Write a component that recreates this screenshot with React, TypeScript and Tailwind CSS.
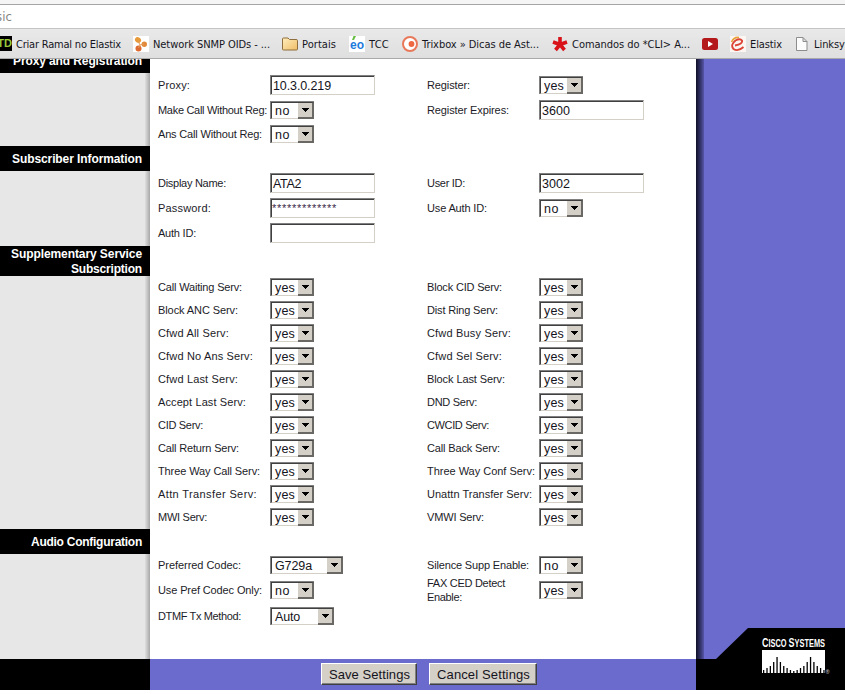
import { useLayoutEffect, useRef } from "react";
import type { ReactNode } from "react";

/** Single line of text whose tracking is tuned so that it spans `w` pixels. */
function Fit({ w, children, className = "" }: { w: number; children: string; className?: string }) {
  const ref = useRef<HTMLSpanElement>(null);
  useLayoutEffect(() => {
    const el = ref.current;
    if (!el) return;
    el.style.letterSpacing = "0px";
    const natural = el.getBoundingClientRect().width;
    el.style.letterSpacing = `${(w - natural) / children.length}px`;
  }, [w, children]);
  return (
    <span ref={ref} className={`inline-block whitespace-pre ${className}`}>
      {children}
    </span>
  );
}

type Line = [string, number];
type Control = { kind: "select" | "input"; value: string; textW: number; wide?: "codec" | "dtmf" };
type Field = { label: Line[]; control: Control };

const yes: Control = { kind: "select", value: "yes", textW: 20 };
const no: Control = { kind: "select", value: "no", textW: 15 };
const input = (value: string, textW: number): Control => ({ kind: "input", value, textW });
const f = (text: string, w: number, control: Control = yes): Field => ({ label: [[text, w]], control });

const registration: [Field, Field | null][] = [
  [f("Proxy:", 32, input("10.3.0.219", 58)), f("Register:", 43)],
  [f("Make Call Without Reg:", 109, no), f("Register Expires:", 82, input("3600", 28))],
  [f("Ans Call Without Reg:", 104, no), null],
];
const subscriber: [Field, Field | null][] = [
  [f("Display Name:", 68, input("ATA2", 28)), f("User ID:", 38, input("3002", 28))],
  [f("Password:", 53, input("*************", 65)), f("Use Auth ID:", 60, no)],
  [f("Auth ID:", 38, input("", 0)), null],
];
const services: [Field, Field][] = [
  [f("Call Waiting Serv:", 84), f("Block CID Serv:", 75)],
  [f("Block ANC Serv:", 80), f("Dist Ring Serv:", 71)],
  [f("Cfwd All Serv:", 71), f("Cfwd Busy Serv:", 84)],
  [f("Cfwd No Ans Serv:", 95), f("Cfwd Sel Serv:", 75)],
  [f("Cfwd Last Serv:", 80), f("Block Last Serv:", 78)],
  [f("Accept Last Serv:", 88), f("DND Serv:", 50)],
  [f("CID Serv:", 45), f("CWCID Serv:", 62)],
  [f("Call Return Serv:", 81), f("Call Back Serv:", 73)],
  [f("Three Way Call Serv:", 102), f("Three Way Conf Serv:", 108)],
  [f("Attn Transfer Serv:", 99), f("Unattn Transfer Serv:", 105)],
  [f("MWI Serv:", 49), f("VMWI Serv:", 57)],
];

function Select({ c }: { c: Control }) {
  const width = c.wide === "codec" ? "w-[73px]" : c.wide === "dtmf" ? "w-16" : "w-11";
  return (
    <div className={`flex h-[18px] ${width} border-l border-t border-[#808080] bg-white`}>
      <div className="flex min-w-0 flex-1 items-center border-b border-l border-t border-b-[#d4d0c8] border-l-[#404040] border-t-[#404040] pl-[3px] pt-px text-[12.5px] leading-[15px]">
        <Fit w={c.textW}>{c.value}</Fit>
      </div>
      <div className="flex h-[17px] w-4 shrink-0 items-center justify-center border-b-2 border-r-2 border-t border-b-[#6a6864] border-r-[#6a6864] border-t-[#404040] bg-[#d4d0c8]">
        <svg width="7" height="4" viewBox="0 0 7 4" shapeRendering="crispEdges">
          <path d="M0 0h7v1H0zM1 1h5v1H1zM2 2h3v1H2zM3 3h1v1H3z" fill="#000" />
        </svg>
      </div>
    </div>
  );
}

function Input({ c }: { c: Control }) {
  const stars = c.value.startsWith("*");
  return (
    <div className="h-5 w-[105px] border border-b-[#d4d0c8] border-l-[#808080] border-r-[#d4d0c8] border-t-[#808080] bg-white">
      <div
        className={`h-full border-l border-t border-[#404040] ${
          stars ? "text-[11px] leading-[16px] text-[#3a2848]" : "pl-px text-[12.5px] leading-[18px]"
        }`}
      >
        {c.value && <Fit w={c.textW}>{c.value}</Fit>}
      </div>
    </div>
  );
}

function Cell({ field }: { field: Field | null }) {
  if (!field) return <div className="w-[269px]" />;
  const { label, control } = field;
  return (
    <div className="flex h-full w-[269px] items-center">
      <div className="flex w-28 shrink-0 flex-col text-[11px] leading-[14px] text-[#1c1c28]">
        {label.map(([text, w]) => (
          <div key={text}>
            <Fit w={w}>{text}</Fit>
          </div>
        ))}
      </div>
      {control.kind === "select" ? <Select c={control} /> : <Input c={control} />}
    </div>
  );
}

function Row({ pair, height }: { pair: [Field | null, Field | null]; height: string }) {
  return (
    <div className={`mb-px flex items-center pl-2 ${height}`}>
      <Cell field={pair[0]} />
      <Cell field={pair[1]} />
    </div>
  );
}

function Heading({ children, className }: { children: ReactNode; className: string }) {
  return (
    <div className={`flex flex-col items-end justify-center bg-black pr-2 pt-px text-[12px] font-bold leading-[15px] text-white ${className}`}>
      {children}
    </div>
  );
}

function Panel({ className }: { className: string }) {
  return (
    <div className={`flex justify-end bg-[#e7e7e7] ${className}`}>
      <div className="w-[5px] bg-linear-to-r from-[#e0e0e0] to-[#a8a8a8]" />
    </div>
  );
}

function Bookmark({ icon, text, w, className }: { icon: ReactNode; text?: string; w?: number; className: string }) {
  return (
    <div className={`flex shrink-0 items-center ${className}`}>
      <div className="flex w-4 shrink-0 justify-center">{icon}</div>
      {text && w && (
        <div className="pl-1 pt-[3px]">
          <Fit w={w}>{text}</Fit>
        </div>
      )}
    </div>
  );
}

function Bookmarks() {
  return (
    <div className="flex h-[31px] items-center overflow-hidden border-b border-t border-b-[#a9a9a9] border-t-[#c4c4c4] bg-linear-to-b from-[#e9e9e9] to-[#dfdfdf] font-['DejaVu_Sans_Condensed','DejaVu_Sans',sans-serif] text-[11px] text-[#15151d]">
      <Bookmark
        className="-ml-1 w-[137px]"
        text="Criar Ramal no Elastix"
        w={105}
        icon={
          <div className="flex h-[15px] w-4 items-center justify-end overflow-hidden bg-black font-['Liberation_Sans',sans-serif] text-[11px] font-bold text-[#9acb3c]">
            TD
          </div>
        }
      />
      <Bookmark
        className="w-[149px]"
        text="Network SNMP OIDs - ..."
        w={117}
        icon={
          <svg width="16" height="16" viewBox="0 0 16 16">
            <path d="M0 0h16v16H0z" fill="#fff" />
            <ellipse cx="5" cy="4" rx="3.200" ry="2.700" transform="rotate(35 5 4)" fill="#e79a3a" />
            <circle cx="11.3" cy="8.2" r="2.700" fill="#e28a3a" />
            <circle cx="5.500" cy="12.500" r="3" fill="#dd6a30" />
            <path d="M5 5l2 4-1.500 3M7 9l4-1" stroke="#e39a58" fill="none" />
          </svg>
        }
      />
      <Bookmark
        className="w-[67px]"
        text="Portais"
        w={34}
        icon={
          <svg width="16" height="14" viewBox="0 0 16 14">
            <defs>
              <linearGradient id="folder" x1="0" y1="0" x2="1" y2="1">
                <stop offset="0" stopColor="#ffedbc" />
                <stop offset="1" stopColor="#efbd67" />
              </linearGradient>
            </defs>
            <path d="M.5 12V2Q.5 1 1.500 1h4.500l1.500 1.500h6.500q1.500 0 1.500 1V12q0 1-1 1H1.500q-1 0-1-1z" fill="url(#folder)" stroke="#8e6e3e" />
          </svg>
        }
      />
      <Bookmark
        className="w-[53px]"
        text="TCC"
        w={20}
        icon={
          <div className="relative flex h-4 w-4 items-end justify-center bg-white pb-px font-['Liberation_Sans_Narrow','Liberation_Sans',sans-serif] text-[12px] font-bold leading-[11px] text-[#1d7bdc]">
            eo
            <svg className="absolute left-0.5 top-0" width="5" height="4" viewBox="0 0 5 4">
              <path d="M1 4 2.500 0H5L3 4z" fill="#68bd45" />
            </svg>
          </div>
        }
      />
      <Bookmark
        className="w-[150px]"
        text="Trixbox » Dicas de Ast..."
        w={117}
        icon={
          <svg width="16" height="16" viewBox="0 0 16 16">
            <circle cx="8" cy="8" r="7" fill="#fff" stroke="#e9785a" strokeWidth="2" />
            <circle cx="9.500" cy="8" r="2.900" fill="#ef6740" />
          </svg>
        }
      />
      <Bookmark
        className="w-[150px]"
        text="Comandos do *CLI> A..."
        w={118}
        icon={
          <svg width="16" height="16" viewBox="0 0 16 16">
            <path d="M8 8.500V1M8 8.500L1 6M8 8.500L15 6M8 8.500L3.500 14M8 8.500L12.500 14" stroke="#d91118" strokeWidth="3.600" fill="none" />
          </svg>
        }
      />
      <Bookmark
        className="w-7"
        icon={
          <svg width="16" height="12" viewBox="0 0 16 12">
            <rect width="16" height="12" rx="2.500" fill="#b3191b" />
            <path d="M6 3v6l5-3z" fill="#fff" />
          </svg>
        }
      />
      <Bookmark
        className="w-[64px]"
        text="Elastix"
        w={32}
        icon={
          <svg width="16" height="16" viewBox="0 0 16 16">
            <path d="M0 0h16v16H0z" fill="#fbf6f2" />
            <path d="M1.500 6Q4 .8 9 1.500" stroke="#e8a43a" strokeWidth="1.600" fill="none" />
            <path d="M5 9.500Q13 8 12 4.500Q10 2 5.500 4.500Q0 9 3.500 13Q8 16 13.500 11" stroke="#dc4436" strokeWidth="1.900" fill="none" />
          </svg>
        }
      />
      <Bookmark
        className="w-14"
        text="Linksys"
        w={36}
        icon={
          <svg width="12" height="14" viewBox="0 0 12 14">
            <path d="M.5.5h6.500l4 4v9H.5zM7 .5v4h4" fill="#fcfcfc" stroke="#8d8d8d" />
          </svg>
        }
      />
    </div>
  );
}

function SettingsButton({ text, w, className }: { text: string; w: number; className: string }) {
  return (
    <div
      className={`flex h-[22px] items-center border border-b-[#404040] border-l-white border-r-[#404040] border-t-white bg-[#d4d0c8] pl-[7px] pt-px text-[13px] shadow-[inset_-1px_-1px_0_#808080] ${className}`}
    >
      <Fit w={w}>{text}</Fit>
    </div>
  );
}

const bridge = [3, 5, 7, 11, 16, 11, 7, 5, 3, 2, 3, 5, 7, 11, 16, 11, 7, 5, 3];

function CiscoCorner() {
  return (
    <svg className="absolute bottom-0 right-0" width="149" height="62" viewBox="0 0 149 62">
      <path d="M0 31H20L52 0H149V62H0z" fill="#000" />
      <text
        x="66"
        y="19"
        textLength="63"
        lengthAdjust="spacingAndGlyphs"
        fill="#fff"
        fontWeight="700"
        fontFamily="'Liberation Sans Narrow','Liberation Sans',sans-serif"
      >
        <tspan fontSize="12.500">C</tspan>
        <tspan fontSize="10.300">ISCO </tspan>
        <tspan fontSize="12.500">S</tspan>
        <tspan fontSize="10.300">YSTEMS</tspan>
      </text>
      <path d="M66 22h63v23H66z" fill="#fff" />
      <g fill="#000">
        {bridge.map((h, i) => (
          <rect key={i} x={67 + i * 3.35} y={45 - h} width="1.300" height={h} />
        ))}
      </g>
      <text x="129.500" y="46" fontSize="5.500" fill="#ddd" fontFamily="'Liberation Sans',sans-serif">®</text>
    </svg>
  );
}

export default function App() {
  return (
    <div className="h-[694px] w-[845px] overflow-hidden bg-white font-['Liberation_Sans',Arial,sans-serif] text-[#141420]">
      <div className="h-[5px] border-b border-[#a5a5a5] bg-[#f5f5f5]" />
      <div className="flex h-[23px] items-center bg-white font-['DejaVu_Sans_Condensed','DejaVu_Sans',sans-serif] text-[13px] text-[#858585]">
        <div className="-ml-1">
          <Fit w={16}>sic</Fit>
        </div>
      </div>
      <Bookmarks />
      <div className="relative flex h-[631px] bg-[#6b6bce]">
        <div className="flex w-[150px] shrink-0 flex-col bg-black">
          <div className="flex h-3.5 items-end justify-end overflow-hidden pb-[3px] pr-2 text-[12px] font-bold leading-[18px] text-white">
            <Fit w={129}>Proxy and Registration</Fit>
          </div>
          <Panel className="h-[73px]" />
          <Heading className="h-[25px]">
            <Fit w={130}>Subscriber Information</Fit>
          </Heading>
          <Panel className="h-[75px]" />
          <Heading className="h-[30px]">
            <Fit w={131}>Supplementary Service</Fit>
            <Fit w={71}>Subscription</Fit>
          </Heading>
          <Panel className="h-[253px]" />
          <Heading className="h-[25px]">
            <Fit w={111}>Audio Configuration</Fit>
          </Heading>
          <Panel className="h-[105px]" />
        </div>
        <div className="flex w-[546px] shrink-0 flex-col">
          <div className="h-[600px] bg-white">
            <div className="pt-3.5">
              {registration.map((pair, i) => (
                <Row key={i} pair={pair} height={i === 2 ? "h-[22px]" : "h-6"} />
              ))}
            </div>
            <div className="pt-[25px]">
              {subscriber.map((pair, i) => (
                <Row key={i} pair={pair} height="h-6" />
              ))}
            </div>
            <div className="pt-[30px]">
              {services.map((pair, i) => (
                <Row key={i} pair={pair} height="h-[22px]" />
              ))}
            </div>
            <div className="pt-[25px]">
              <Row
                height="h-[22px]"
                pair={[
                  f("Preferred Codec:", 83, { kind: "select", value: "G729a", textW: 37, wide: "codec" }),
                  f("Silence Supp Enable:", 102, no),
                ]}
              />
              <Row
                height="h-[26px]"
                pair={[
                  f("Use Pref Codec Only:", 104, no),
                  { label: [["FAX CED Detect", 78], ["Enable:", 35]], control: yes },
                ]}
              />
              <Row
                height="h-6"
                pair={[f("DTMF Tx Method:", 83, { kind: "select", value: "Auto", textW: 25, wide: "dtmf" }), null]}
              />
            </div>
          </div>
          <div className="flex flex-1 items-start gap-3 pl-[171px] pt-1">
            <SettingsButton text="Save Settings" w={81} className="w-24" />
            <SettingsButton text="Cancel Settings" w={93} className="w-[108px]" />
          </div>
        </div>
        <div className="w-2 bg-linear-to-r from-[#101028] via-[#303064] to-[#5656a8]" />
        <CiscoCorner />
      </div>
    </div>
  );
}
